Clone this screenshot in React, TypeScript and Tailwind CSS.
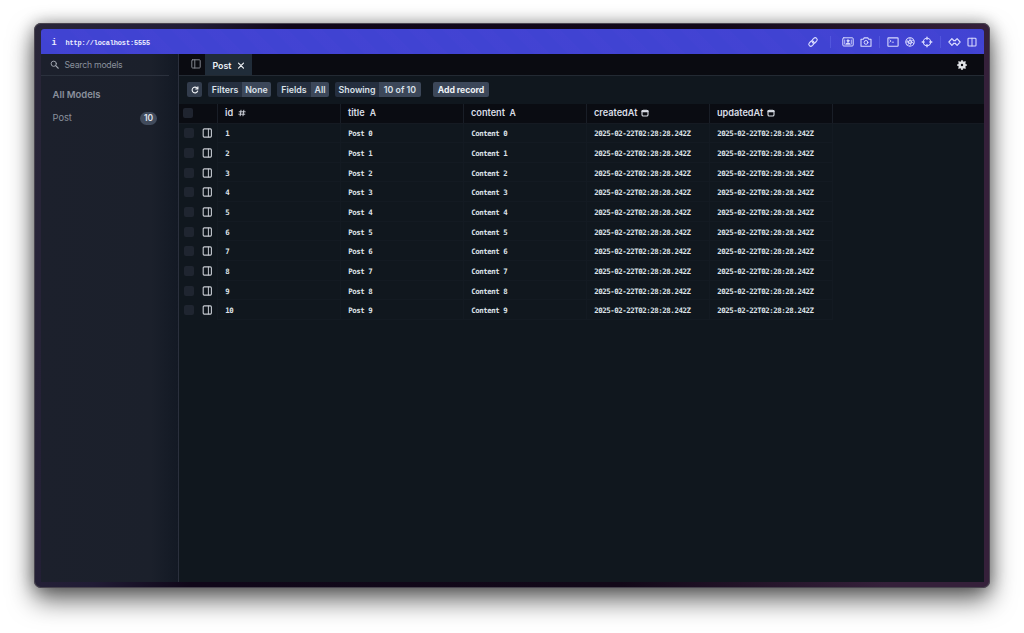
import React from "react";

const rows = Array.from({ length: 10 }, (_, i) => i);
const STAMP = "2025-02-22T02:28:28.242Z";

type IconProps = { className?: string; children: React.ReactNode; box?: string };
function Icon({ className = "", children, box = "0 0 12 12" }: IconProps) {
  return (
    <svg viewBox={box} className={`shrink-0 ${className}`} fill="none" stroke="currentColor" strokeLinecap="round" strokeLinejoin="round">
      {children}
    </svg>
  );
}

function BarIcons() {
  return (
    <div className="flex h-full items-center text-[#d9dbff]">
      <Icon className="size-[12px]">
        <g transform="rotate(-45 6 6)" strokeWidth="1.1">
          <rect x="0.9" y="4" width="5.8" height="4" rx="2" />
          <rect x="5.3" y="4" width="5.8" height="4" rx="2" />
        </g>
      </Icon>
      <span className="ml-[11px] h-[12px] w-px bg-[#5256dd]" />
      <Icon className="ml-[11px] size-[12px]">
        <rect x="0.8" y="1.8" width="10.4" height="8.2" rx="1" />
        <circle cx="6" cy="4.8" r="1" fill="currentColor" />
        <path d="M3.8 8c.5-1.6 3.9-1.6 4.4 0zM2.7 4v4M9.3 4v4" fill="currentColor" strokeWidth=".8" />
      </Icon>
      <Icon className="ml-[5.5px] size-[12px]">
        <path d="M1 3.2h2.3l.9-1.3h3.6l.9 1.3H11v7H1z" strokeWidth="1.1" />
        <circle cx="6" cy="6.4" r="1.9" />
      </Icon>
      <span className="ml-[7px] h-[12px] w-px bg-[#5256dd]" />
      <Icon className="ml-[7px] size-[12px]">
        <rect x="0.9" y="1.9" width="10.2" height="8.4" rx=".6" strokeWidth="1.1" />
        <path d="M2.8 4l1.3 1-1.3 1M5.2 6.2h1.4" strokeWidth=".8" />
      </Icon>
      <Icon className="ml-[5.5px] size-[12px]">
        <circle cx="6" cy="6" r="4.2" strokeWidth="1.1" />
        <circle cx="6" cy="6" r="1.6" fill="currentColor" fillOpacity=".4" />
        <path d="M6 4.3h3.6M4.5 6.8L2.7 3.7M7.5 6.9L5.7 10M2 6h2.4M9.7 7.7L7.6 5.6M6 2v2M4.6 7.5l-1 1.6" strokeWidth=".8" />
      </Icon>
      <Icon className="ml-[4.5px] size-[12px]">
        <circle cx="6" cy="6" r="3.7" strokeWidth="1.1" />
        <path d="M6 1.2v2M6 8.8v2M1.2 6h2M8.8 6h2" strokeWidth="1.4" />
      </Icon>
      <span className="ml-[7px] h-[12px] w-px bg-[#5256dd]" />
      <Icon className="ml-[7px] h-[12px] w-[13px]" box="0 0 13 12">
        <path d="M.9 6l3-3.3 1.4 1.2v.7h2.4v-.7l1.4-1.2 3 3.3-3 3.3-1.4-1.2v-.7H5.3v.7L3.9 9.3z" strokeWidth="1.2" />
      </Icon>
      <Icon className="ml-[5px] size-[12px]">
        <rect x="2" y="2.2" width="8" height="7.8" rx=".8" strokeWidth="1.1" />
        <path d="M6 2.2V10" />
      </Icon>
    </div>
  );
}

function PanelIcon({ className }: { className: string }) {
  return (
    <Icon className={className}>
      <rect x="2.2" y="1.9" width="8.2" height="8.2" rx="1" strokeWidth="1.1" />
      <path d="M7.4 2v8" strokeWidth="1" />
    </Icon>
  );
}

function Split({ label, value, className, left, right }: { label: string; value: string; className: string; left: string; right: string }) {
  return (
    <div className={`flex h-[15px] overflow-hidden rounded-[2px] text-[8.8px] leading-[16px] font-semibold text-[#dbe1e9] ${className}`}>
      <span className={`bg-[#252f3f] text-center ${left}`}>{label}</span>
      <span className={`bg-[#3c4759] text-center ${right}`}>{value}</span>
    </div>
  );
}

function Calendar() {
  return (
    <Icon className="ml-[4px] size-[8px]" box="0 0 8 8">
      <rect x="1" y="1.3" width="6" height="5.7" rx="1.3" strokeWidth="1.1" />
      <path d="M1.4 2.3h5.2" strokeWidth="2" />
    </Icon>
  );
}

function HeadCell({ name, children }: { name: string; children: React.ReactNode }) {
  return (
    <div className="flex w-[123px] shrink-0 items-center border-l border-[#191e27] pl-[7px] text-[9.2px] font-semibold text-[#d9dde5]">
      <span className="tracking-[-0.02px]">{name}</span>
      {children}
    </div>
  );
}

function Cell({ children }: { children: React.ReactNode }) {
  return (
    <div className="flex w-[123px] shrink-0 items-center border-b border-l border-[#131a22] pt-[2px] pl-[7.2px] font-['DejaVu_Sans_Mono',monospace] text-[7.4px] font-bold tracking-[-0.44px] whitespace-pre text-[#dfe4ea]">
      {children}
    </div>
  );
}

export default function App() {
  return (
    <div className="h-[633px] w-[1024px] overflow-hidden bg-white pt-[23px] pl-[34px] font-[Inter,sans-serif]">
      <div className="h-[565px] w-[956px] rounded-[7px] bg-[linear-gradient(100deg,#292638_0%,#211c35_15%,#100719_24%,#120818_65%,#35203a_90%)] pt-[6px] pl-[6.5px] shadow-[0_12px_26px_rgba(0,0,0,0.6),0_0_16px_rgba(0,0,0,0.32),inset_0_0_0_1px_#49454f]">
        <div className="flex h-[553px] w-[943px] flex-col overflow-hidden rounded-t-[3px] bg-[#10171e]">
          <div className="flex h-[25px] shrink-0 items-center justify-between bg-[#4043d2] bg-[repeating-linear-gradient(45deg,transparent_0_12px,rgba(90,70,220,0.09)_14px_24px)] pr-[6px] pl-[11px]">
            <div className="flex items-center pt-[2px] font-['Liberation_Mono',monospace] font-bold text-[#eceeff]">
              <span className="w-[14px] text-[8.6px] leading-[12px]">i</span>
              <span className="text-[6.9px] leading-[12px] tracking-[-0.11px]">http://localhost:5555</span>
            </div>
            <BarIcons />
          </div>

          <div className="flex min-h-0 flex-1">
            <aside className="w-[138.5px] shrink-0 border-r border-[#2b303d] bg-[linear-gradient(90deg,#1c202c_0%,#1b202b_80%,#131924_100%)] text-[#8a909c]">
              <div className="mr-[9px] flex h-[22px] items-center border-b border-[#2b313d] pl-[9px] text-[8.7px]">
                <Icon className="size-[9px] text-[#a0a5af]">
                  <circle cx="5" cy="5" r="3.5" strokeWidth="1.3" />
                  <path d="M7.6 7.6L11 11" strokeWidth="1.5" />
                </Icon>
                <span className="ml-[6px] pt-[2px] tracking-[-0.25px]">Search models</span>
              </div>
              <div className="mt-[12px] pl-[12px] text-[9.5px] leading-[14px] font-semibold">All Models</div>
              <div className="mt-[8px] flex h-[16px] items-center justify-between pr-[21px] pl-[12px] text-[9.3px]">
                <span>Post</span>
                <span className="flex h-[13px] w-[17px] items-center justify-center rounded-full bg-[#414b5c] text-[8.5px] font-semibold text-[#e2e6ee]">10</span>
              </div>
            </aside>

            <main className="flex min-w-0 flex-1 flex-col">
              <div className="flex h-[22px] shrink-0 items-stretch border-b border-[#232a33] bg-[#0a0b11]">
                <div className="flex w-[26px] items-center justify-end pr-[3px] pb-[2px]">
                  <Icon className="size-[12px] text-[#81858d]">
                    <rect x="1.8" y="1.8" width="8.4" height="8.2" rx=".8" />
                    <path d="M4.8 1.8V10" />
                  </Icon>
                </div>
                <div className="flex w-[47px] items-center bg-[#202c39] pt-[2px] pl-[7.5px] text-[8.8px] font-semibold text-[#eef1f5]">
                  Post
                  <Icon className="ml-[6px] size-[8px]" box="0 0 8 8">
                    <path d="M1.5 1.2l5 5M6.5 1.2l-5 5" strokeWidth="1.2" />
                  </Icon>
                </div>
                <div className="flex flex-1 items-center justify-end pt-px pr-[16px] text-[#e2e4e8]">
                  <Icon className="size-[12px]">
                    <circle cx="6" cy="6" r="2.5" strokeWidth="2.6" />
                    <path d="M6 1.8v.8M6 9.4v.8M1.8 6h.8M9.4 6h.8M3 3l.5.5M8.5 8.5L9 9M9 3l-.5.5M3.5 8.5L3 9" strokeWidth="1.7" />
                  </Icon>
                </div>
              </div>

              <div className="flex h-[27.5px] shrink-0 items-center pl-[8px]">
                <div className="flex size-[15px] items-center justify-center rounded-[2px] bg-[#323c4c] text-[#f1f3f6]">
                  <Icon className="size-[8px]">
                    <path d="M10 7.6A4.3 4.3 0 1 1 9 2.9L10 4M10.4 1v3.4H7" strokeWidth="1.6" />
                  </Icon>
                </div>
                <Split label="Filters" value="None" className="ml-[6px]" left="w-[34px]" right="w-[29px]" />
                <Split label="Fields" value="All" className="ml-[6px]" left="w-[34px]" right="w-[18px]" />
                <Split label="Showing" value="10 of 10" className="ml-[6px]" left="w-[44px]" right="w-[42px]" />
                <div className="ml-[12px] h-[15px] w-[56px] rounded-[2px] bg-[#3c4759] text-center text-[8.7px] leading-[16px] font-bold tracking-[-0.05px] text-[#eef1f5]">Add record</div>
              </div>

              <div className="flex h-[20px] shrink-0 border-b border-[#151a22] bg-[#0a0c12]">
                <div className="flex w-[38px] items-center pl-[4px]">
                  <span className="size-[10px] rounded-[2px] bg-[#1f242f]" />
                </div>
                <HeadCell name="id">
                  <Icon className="ml-[4.5px] size-[8px]" box="0 0 8 8">
                    <path d="M3 1.2L2.2 6.8M5.8 1.2L5 6.8M1.2 2.8h6M.8 5.2h6" strokeWidth=".9" />
                  </Icon>
                </HeadCell>
                <HeadCell name="title"><span className="ml-[5px] pt-px text-[8.7px]">A</span></HeadCell>
                <HeadCell name="content"><span className="ml-[4.5px] pt-px text-[8.7px]">A</span></HeadCell>
                <HeadCell name="createdAt"><Calendar /></HeadCell>
                <HeadCell name="updatedAt"><Calendar /></HeadCell>
                <div className="border-l border-[#191e27]" />
              </div>

              {rows.map((i) => (
                <div key={i} className="flex h-[19.67px] shrink-0">
                  <div className="flex w-[38px] items-center pl-[5px]">
                    <span className="size-[10px] rounded-[2px] bg-[#1f2530]" />
                    <PanelIcon className="ml-[7px] size-[12px] text-[#c6cad1]" />
                  </div>
                  <Cell>{i + 1}</Cell>
                  <Cell>{`Post ${i}`}</Cell>
                  <Cell>{`Content ${i}`}</Cell>
                  <Cell>{STAMP}</Cell>
                  <Cell>{STAMP}</Cell>
                  <div className="border-l border-[#131a22]" />
                </div>
              ))}
            </main>
          </div>
        </div>
      </div>
    </div>
  );
}
